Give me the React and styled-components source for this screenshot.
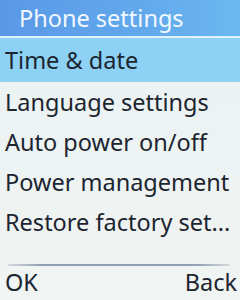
import styled, { createGlobalStyle } from 'styled-components';

const GlobalStyle = createGlobalStyle`
  html, body {
    margin: 0;
    padding: 0;
    background: #eef3f3;
  }
`;

const items = [
  'Time & date',
  'Language settings',
  'Auto power on/off',
  'Power management',
  'Restore factory set...',
];

const App = () => {
  return (
    <>
      <GlobalStyle />
      <SScreen>
        <SHeader>Phone settings</SHeader>
        <SList>
          {items.map((item, i) => (
            <SItem key={item} $selected={i === 0}>{item}</SItem>
          ))}
        </SList>
        <SDivider />
        <SSoftKeys>
          <span>OK</span>
          <span>Back</span>
        </SSoftKeys>
      </SScreen>
    </>
  );
};

const SScreen = styled.div`
  width: 240px;
  height: 300px;
  display: flex;
  flex-direction: column;
  overflow: hidden;
  font-family: "Noto Sans", sans-serif;
  color: #1c2530;
  background: linear-gradient(#eaf2f3, #f0f4f2);
`;

const SHeader = styled.div`
  height: 36px;
  display: flex;
  align-items: center;
  padding-left: 19px;
  font-size: 23.5px;
  color: #f2f8ff;
  background: linear-gradient(90deg, #5a98e6, #62a9ec 60%, #6bb8f0);
  border-bottom: 2px solid #e2f2fb;
`;

const SList = styled.div`
  display: flex;
  flex-direction: column;
`;

const SItem = styled.div`
  height: ${({ $selected }) => ($selected ? '44px' : '40px')};
  display: flex;
  align-items: center;
  padding-left: 5px;
  font-size: 23.5px;
  white-space: nowrap;
  background: ${({ $selected }) => ($selected ? '#8dd2f4' : 'transparent')};
`;

const SDivider = styled.div`
  margin: 22px 10px 0 8px;
  height: 2px;
  background: linear-gradient(90deg, rgba(150, 162, 180, 0.3), #939fb2 15%, #939fb2 85%, rgba(150, 162, 180, 0.3));
`;

const SSoftKeys = styled.div`
  flex: 1;
  display: flex;
  justify-content: space-between;
  align-items: center;
  padding: 0 3px 2px 5px;
  font-size: 23.5px;
`;

export default App;
